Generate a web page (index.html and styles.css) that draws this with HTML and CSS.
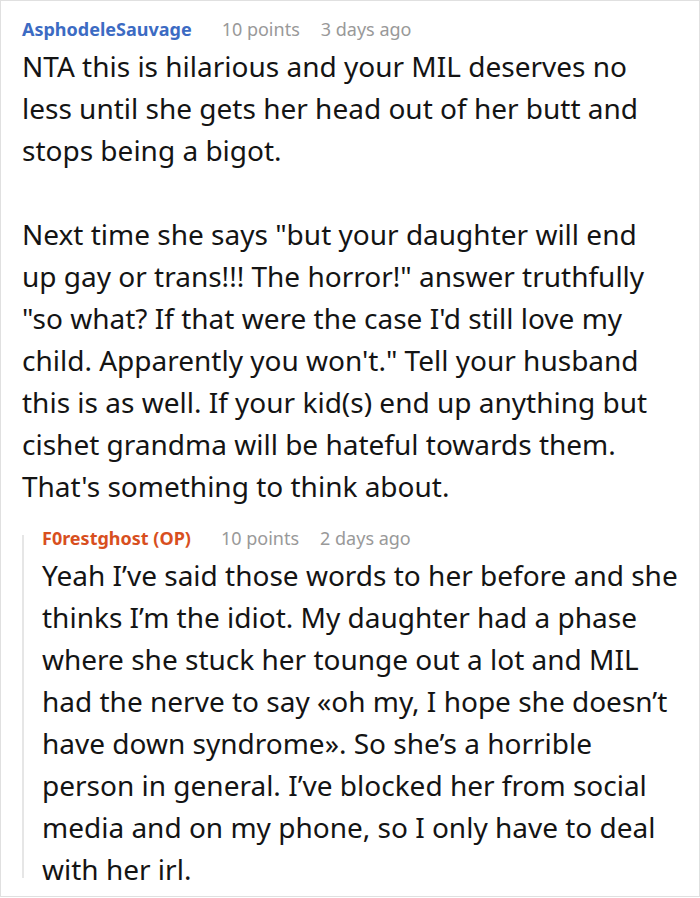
FILE: index.html
```html
<!DOCTYPE html>
<html>
<head>
<meta charset="utf-8">
<link rel="stylesheet" href="styles.css">
</head>
<body>
<div class="thread">
  <div class="comment">
    <div class="meta">
      <span class="user user-blue">AsphodeleSauvage</span>
      <span class="points">10 points</span>
      <span class="time">3 days ago</span>
    </div>
    <div class="text">
      <p>NTA this is hilarious and your MIL deserves no less until she gets her head out of her butt and stops being a bigot.</p>
      <p>Next time she says "but your daughter will end up gay or trans!!! The horror!" answer truthfully "so what? If that were the case I'd still love my child. Apparently you won't." Tell your husband this is as well. If your kid(s) end up anything but cishet grandma will be hateful towards them. That's something to think about.</p>
    </div>
  </div>
  <div class="reply">
    <div class="thread-line"></div>
    <div class="comment">
      <div class="meta">
        <span class="user user-orange">F0restghost (OP)</span>
        <span class="points">10 points</span>
        <span class="time">2 days ago</span>
      </div>
      <div class="text">
        <p>Yeah I’ve said those words to her before and she thinks I’m the idiot. My daughter had a phase where she stuck her tounge out a lot and MIL had the nerve to say «oh my, I hope she doesn’t have down syndrome». So she’s a horrible person in general. I’ve blocked her from social media and on my phone, so I only have to deal with her irl.</p>
      </div>
    </div>
  </div>
</div>
</body>
</html>
```

FILE: styles.css
```css
html, body {
  margin: 0;
  padding: 0;
  background: #ffffff;
}

body {
  font-family: "Noto Sans", "Open Sans", sans-serif;
  color: #141414;
}

.thread {
  width: 700px;
  box-sizing: border-box;
  border: 1px solid #e0e0e0;
  padding: 16px 21.5px 6px 21px;
}

.meta {
  display: flex;
  align-items: baseline;
  font-size: 18px;
  line-height: 24px;
  height: 24px;
  white-space: nowrap;
}

.user {
  font-weight: 700;
  margin-right: 30px;
}

.user-blue {
  color: #3c6bc3;
}

.user-orange {
  color: #d84f1e;
}

.points,
.time {
  color: #999999;
}

.points {
  margin-right: 21px;
}

.text {
  margin-top: 4px;
  font-size: 28px;
  line-height: 42px;
}

.text p {
  margin: 0;
}

.text p + p {
  margin-top: 42px;
}

.reply {
  display: flex;
  margin-top: 19px;
  margin-right: -4px;
}

.thread-line {
  width: 2px;
  flex: none;
  background: #e6e6e6;
  margin: 9px 18px 12px 0;
}

.reply .comment {
  flex: 1;
  min-width: 0;
}
```
